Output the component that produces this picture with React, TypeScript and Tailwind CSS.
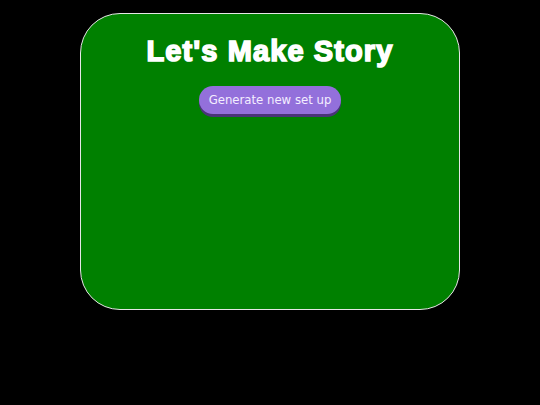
export default function App() {
  return (
    <div className="min-h-[405px] w-full bg-black pt-[13px]">
      <div className="mx-auto flex h-[297px] w-[380px] flex-col items-center rounded-[40px] border border-[#e6e6e6] bg-[#008000]">
        <h1
          className="mt-[19px] text-[29px] font-bold leading-[36px] tracking-[1.1px] text-white [-webkit-text-stroke:1.6px_white]"
          style={{ fontFamily: '"Liberation Sans", Arial, sans-serif' }}
        >
          Let's Make Story
        </h1>
        <button
          className="mt-[17px] h-[28px] rounded-full bg-[#9370db] px-[10px] text-[13px] text-[#f3eeff] shadow-[0_3px_0_#4a3479]"
          style={{ fontFamily: '"DejaVu Sans Condensed", "DejaVu Sans", sans-serif' }}
        >
          Generate new set up
        </button>
      </div>
    </div>
  );
}
